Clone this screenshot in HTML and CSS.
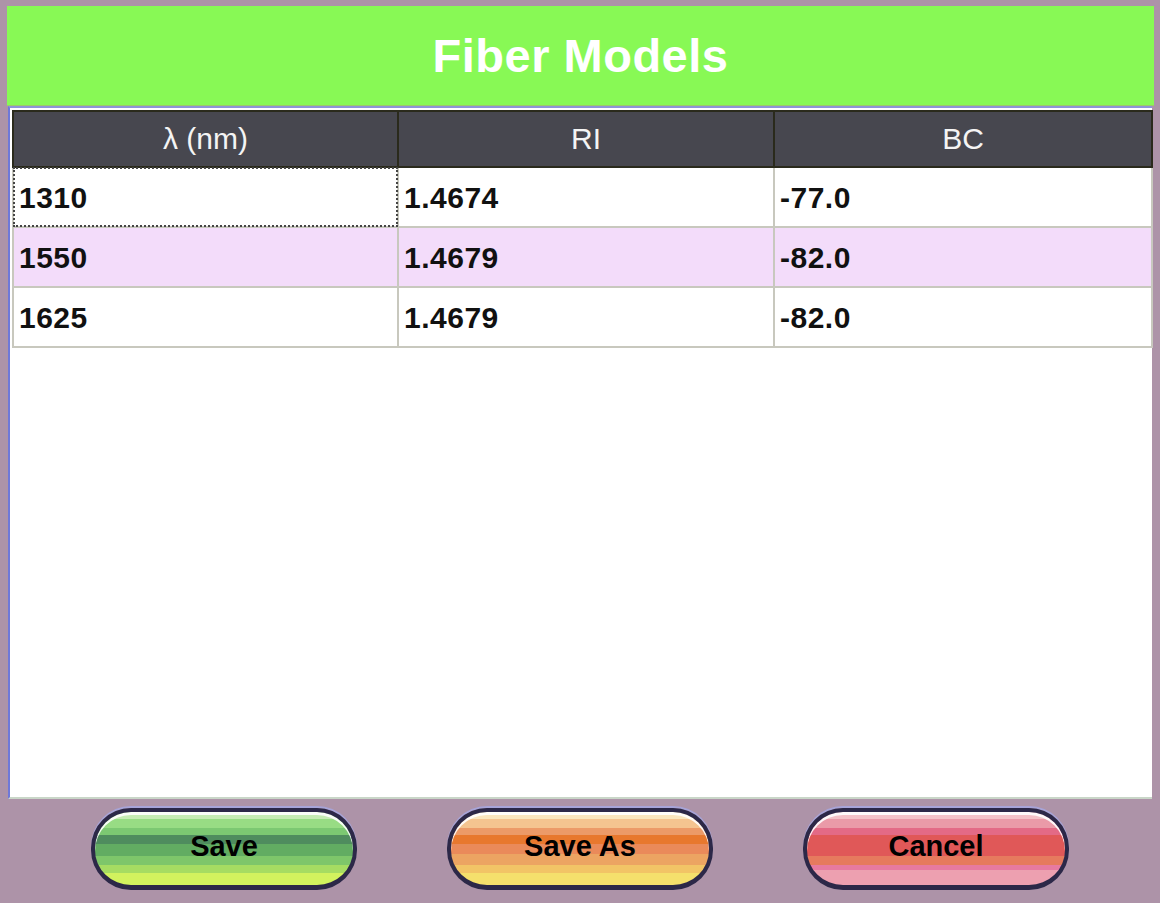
FILE: index.html
```html
<!DOCTYPE html>
<html>
    <head>
        <title>Fiber Models</title>
        <link rel="stylesheet" href="styles.css">
    </head>
    <body>
        <div id="window">
            <div id="title">Fiber Models</div>
            <div id="panel">
                <table id="models">
                    <colgroup>
                        <col class="col-wl">
                        <col class="col-ri">
                        <col class="col-bc">
                    </colgroup>
                    <thead>
                        <tr>
                            <th>λ (nm)</th>
                            <th>RI</th>
                            <th>BC</th>
                        </tr>
                    </thead>
                    <tbody>
                        <tr>
                            <td class="focus">1310</td>
                            <td>1.4674</td>
                            <td>-77.0</td>
                        </tr>
                        <tr class="selected">
                            <td>1550</td>
                            <td>1.4679</td>
                            <td>-82.0</td>
                        </tr>
                        <tr>
                            <td>1625</td>
                            <td>1.4679</td>
                            <td>-82.0</td>
                        </tr>
                    </tbody>
                </table>
            </div>
        </div>
        <div id="buttons">
            <div class="btn btn-green">Save</div>
            <div class="btn btn-orange">Save As</div>
            <div class="btn btn-red">Cancel</div>
        </div>
    </body>
</html>
```

FILE: styles.css
```css
body {
    background: #ad93a8;
    font-family: "Liberation Sans", Arial, Helvetica, sans-serif;
    margin: 0px;
    width: 1160px;
    height: 903px;
    overflow: hidden;
}
#window {
    margin: 6px 6px 0px 7px;
}
#title {
    background: #88f955;
    height: 100px;
    color: #ffffff;
    font-size: 47px;
    font-weight: bold;
    letter-spacing: 0.5px;
    text-align: center;
    line-height: 100px;
    box-shadow: inset 0px -1px 0px #9ec86a;
}
#panel {
    background: #ffffff;
    height: 687px;
    margin: 0px 2px 0px 1px;
    border-top: 2px solid #8e94d6;
    border-left: 2px solid #6f78d8;
    border-bottom: 2px solid #c9d6c8;
    padding: 2px 0px 0px 2px;
}
#models {
    border-collapse: collapse;
    width: 1139px;
    table-layout: fixed;
}
.col-wl {
    width: 385px;
}
.col-ri {
    width: 376px;
}
.col-bc {
    width: 378px;
}
#models th {
    background: #47474f;
    color: #f4f4f4;
    font-size: 30px;
    font-weight: normal;
    height: 54px;
    border: 2px solid #2a2a1c;
    padding: 0px;
}
#models td {
    height: 56px;
    font-size: 30px;
    font-weight: bold;
    letter-spacing: 0.5px;
    color: #111111;
    padding: 2px 0px 0px 5px;
    border: 2px solid #c8c8be;
    border-top: none;
}
#models tr.selected td {
    background: #f3dcfa;
}
#models td.focus {
    outline: 2px dotted #444444;
    outline-offset: -2px;
}
#buttons {
    display: flex;
    justify-content: center;
    gap: 90px;
    padding-top: 9px;
}
.btn {
    width: 258px;
    height: 73px;
    border-radius: 40px;
    border: 4px solid #2c2848;
    border-bottom-width: 5px;
    box-shadow: 0px -2px 0px #a7a4d8, inset 0px 3px 0px rgba(255,255,255,0.9);
    font-size: 29px;
    font-weight: bold;
    color: #000000;
    text-align: center;
    line-height: 68px;
    box-sizing: content-box;
}
.btn-green {
    background: linear-gradient(to bottom,
        #c6ecb4 0%, #c6ecb4 10%,
        #98dc84 10%, #98dc84 22%,
        #7cc872 22%, #7cc872 32%,
        #4f8c5e 32%, #4f8c5e 44%,
        #62ac62 44%, #62ac62 60%,
        #7ec66a 60%, #7ec66a 72%,
        #a6dc62 72%, #a6dc62 84%,
        #d2f25e 84%, #d2f25e 100%);
}
.btn-orange {
    background: linear-gradient(to bottom,
        #fae6be 0%, #fae6be 10%,
        #f4c490 10%, #f4c490 22%,
        #ec9a68 22%, #ec9a68 32%,
        #e8782e 32%, #e8782e 44%,
        #ea8a5a 44%, #ea8a5a 58%,
        #eca462 58%, #eca462 72%,
        #f2c466 72%, #f2c466 84%,
        #f5e06c 84%, #f5e06c 100%);
}
.btn-red {
    background: linear-gradient(to bottom,
        #f4c2c8 0%, #f4c2c8 10%,
        #ea9aa8 10%, #ea9aa8 22%,
        #e36a86 22%, #e36a86 32%,
        #e05858 32%, #e05858 60%,
        #e67a5e 60%, #e67a5e 72%,
        #e77aa0 72%, #e77aa0 80%,
        #eda0b0 80%, #eda0b0 100%);
}
```
